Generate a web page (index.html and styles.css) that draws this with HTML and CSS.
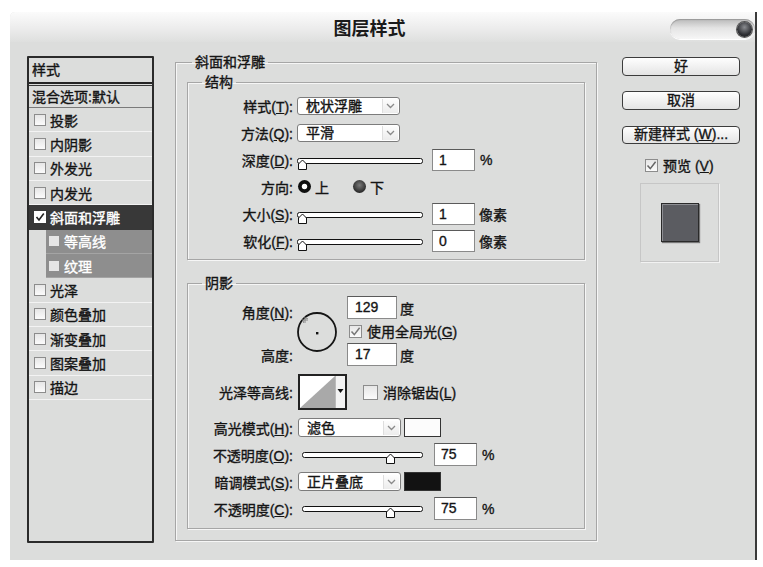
FILE: index.html
```html
<!doctype html>
<html>
<head>
  <meta charset="utf-8">
  <title>图层样式</title>
  <link rel="stylesheet" href="styles.css">
</head>
<body>

<div class="dialog">
  <div class="titlebar">
    <div></div>
    <h1 class="title">图层样式</h1>
    <div class="pill"><span class="pill-ball"></span></div>
  </div>

  <div class="dialog-body">

    <div class="style-list">
      <div class="list-head">样式</div>
      <div class="list-blend">混合选项:默认</div>
      <div class="list-item"><span class="cb"></span>投影</div>
      <div class="list-item"><span class="cb"></span>内阴影</div>
      <div class="list-item"><span class="cb"></span>外发光</div>
      <div class="list-item"><span class="cb"></span>内发光</div>
      <div class="list-item is-selected"><span class="cb is-checked"><svg width="10" height="10" viewBox="0 0 10 10"><path d="M1.5 5 L4 8 L8.8 1.5" fill="none" stroke="#222" stroke-width="1.6"/></svg></span>斜面和浮雕</div>
      <div class="list-item is-sub"><span class="cb"></span>等高线</div>
      <div class="list-item is-sub"><span class="cb"></span>纹理</div>
      <div class="list-item"><span class="cb"></span>光泽</div>
      <div class="list-item"><span class="cb"></span>颜色叠加</div>
      <div class="list-item"><span class="cb"></span>渐变叠加</div>
      <div class="list-item"><span class="cb"></span>图案叠加</div>
      <div class="list-item"><span class="cb"></span>描边</div>
    </div>

    <fieldset class="group group-main">
      <legend>斜面和浮雕</legend>

      <fieldset class="group group-inner group-structure">
        <legend>结构</legend>

        <div class="row">
          <span class="lbl">样式(<u>T</u>):</span>
          <div class="select">枕状浮雕<span class="select-arrow"><svg width="9" height="6" viewBox="0 0 9 6"><path d="M1 1 L4.5 4.5 L8 1" fill="none" stroke="#8a8a8a" stroke-width="1.3"/></svg></span></div>
        </div>

        <div class="row">
          <span class="lbl">方法(<u>Q</u>):</span>
          <div class="select">平滑<span class="select-arrow"><svg width="9" height="6" viewBox="0 0 9 6"><path d="M1 1 L4.5 4.5 L8 1" fill="none" stroke="#8a8a8a" stroke-width="1.3"/></svg></span></div>
        </div>

        <div class="row">
          <span class="lbl">深度(<u>D</u>):</span>
          <svg class="slider slider-top" width="127" height="16" viewBox="0 0 127 16">
            <rect x="0.5" y="4.5" width="125" height="5" rx="2" fill="#fff" stroke="#111"/>
            <path d="M1.5 15.5 V10 L5.5 6 L9.5 10 V15.5 Z" fill="#fff" stroke="#111"/>
          </svg>
          <span class="num">1</span>
          <span class="unit">%</span>
        </div>

        <div class="row">
          <span class="lbl">方向:</span>
          <span class="radio is-on"></span><span class="radio-text">上</span>
          <span class="radio is-off"></span><span class="radio-text">下</span>
        </div>

        <div class="row">
          <span class="lbl">大小(<u>S</u>):</span>
          <svg class="slider slider-top" width="127" height="16" viewBox="0 0 127 16">
            <rect x="0.5" y="4.5" width="125" height="5" rx="2" fill="#fff" stroke="#111"/>
            <path d="M1.5 15.5 V10 L5.5 6 L9.5 10 V15.5 Z" fill="#fff" stroke="#111"/>
          </svg>
          <span class="num">1</span>
          <span class="unit unit-px">像素</span>
        </div>

        <div class="row">
          <span class="lbl">软化(<u>F</u>):</span>
          <svg class="slider slider-top" width="127" height="16" viewBox="0 0 127 16">
            <rect x="0.5" y="4.5" width="125" height="5" rx="2" fill="#fff" stroke="#111"/>
            <path d="M1.5 15.5 V10 L5.5 6 L9.5 10 V15.5 Z" fill="#fff" stroke="#111"/>
          </svg>
          <span class="num">0</span>
          <span class="unit unit-px">像素</span>
        </div>
      </fieldset>

      <fieldset class="group group-inner group-shade">
        <legend>阴影</legend>

        <div class="angle-grid">
          <span class="lbl lbl-angle">角度(<u>N</u>):</span>
          <svg class="dial" width="42" height="42" viewBox="0 0 42 42">
            <circle cx="21" cy="21" r="19" fill="none" stroke="#151515" stroke-width="1.8"/>
            <rect x="20" y="21" width="2.4" height="2.4" fill="#111"/>
            <path d="M9 6 V12 M6 9 H12" stroke="#888" stroke-width="1"/>
            <rect x="10.5" y="7" width="1" height="1" fill="#555"/>
            <rect x="7" y="10.5" width="1" height="1" fill="#555"/>
          </svg>
          <div class="ctl ctl-angle"><span class="num num-wide">129</span><span class="unit unit-deg">度</span></div>
          <div class="ctl ctl-global"><span class="cb is-checked cb-gray"><svg width="11" height="11" viewBox="0 0 11 11"><path d="M1.5 5.5 L4.3 8.6 L9.6 1.8" fill="none" stroke="#777" stroke-width="1.5"/></svg></span><span class="cb-text">使用全局光(<u>G</u>)</span></div>
          <span class="lbl lbl-height">高度:</span>
          <div class="ctl ctl-height"><span class="num num-wide">17</span><span class="unit unit-deg">度</span></div>
        </div>

        <div class="row row-contour">
          <span class="lbl">光泽等高线:</span>
          <svg class="contour" width="49" height="36" viewBox="0 0 49 36">
            <rect x="1" y="1" width="47" height="34" fill="#fff" stroke="#222" stroke-width="2"/>
            <path d="M2 34 L37 2 V34 Z" fill="#a9a9a9"/>
            <rect x="37" y="2" width="10" height="32" fill="#f3f3f3"/>
            <path d="M37.5 2 V34" stroke="#bbb" stroke-width="1"/>
            <path d="M39.5 15 H45.5 L42.5 19 Z" fill="#111"/>
          </svg>
          <span class="cb cb-big"></span><span class="cb-text">消除锯齿(<u>L</u>)</span>
        </div>

        <div class="row">
          <span class="lbl">高光模式(<u>H</u>):</span>
          <div class="select select-mode">滤色<span class="select-arrow"><svg width="9" height="6" viewBox="0 0 9 6"><path d="M1 1 L4.5 4.5 L8 1" fill="none" stroke="#8a8a8a" stroke-width="1.3"/></svg></span></div>
          <span class="swatch swatch-light"></span>
        </div>

        <div class="row">
          <span class="lbl">不透明度(<u>O</u>):</span>
          <svg class="slider slider-mid" width="122" height="16" viewBox="0 0 122 16">
            <rect x="0.5" y="3.5" width="120" height="5" rx="2" fill="#fff" stroke="#111"/>
            <path d="M84.5 14.5 V9 L88.5 5 L92.5 9 V14.5 Z" fill="#fff" stroke="#111"/>
          </svg>
          <span class="num num-op">75</span>
          <span class="unit">%</span>
        </div>

        <div class="row">
          <span class="lbl">暗调模式(<u>S</u>):</span>
          <div class="select select-mode">正片叠底<span class="select-arrow"><svg width="9" height="6" viewBox="0 0 9 6"><path d="M1 1 L4.5 4.5 L8 1" fill="none" stroke="#8a8a8a" stroke-width="1.3"/></svg></span></div>
          <span class="swatch swatch-dark"></span>
        </div>

        <div class="row">
          <span class="lbl">不透明度(<u>C</u>):</span>
          <svg class="slider slider-mid" width="122" height="16" viewBox="0 0 122 16">
            <rect x="0.5" y="3.5" width="120" height="5" rx="2" fill="#fff" stroke="#111"/>
            <path d="M84.5 14.5 V9 L88.5 5 L92.5 9 V14.5 Z" fill="#fff" stroke="#111"/>
          </svg>
          <span class="num num-op">75</span>
          <span class="unit">%</span>
        </div>
      </fieldset>
    </fieldset>

    <div class="side">
      <div class="btn">好</div>
      <div class="btn btn-cancel">取消</div>
      <div class="btn btn-new">新建样式 (<u>W</u>)...</div>
      <div class="preview-check">
        <span class="cb is-checked cb-gray"><svg width="11" height="11" viewBox="0 0 11 11"><path d="M1.5 5.5 L4.3 8.6 L9.6 1.8" fill="none" stroke="#666" stroke-width="1.5"/></svg></span>
        <span class="cb-text">预览 (<u>V</u>)</span>
      </div>
      <div class="preview">
        <div class="preview-swatch"></div>
      </div>
    </div>

  </div>
</div>

</body>
</html>
```

FILE: styles.css
```css
body {
  margin: 0;
  background: #fff;
  color: #141414;
  font-family: "Liberation Sans", "Noto Sans CJK SC", sans-serif;
  font-size: 14px;
}

/* the dialog text in the shot is heavier than Noto's regular cut */
.dialog-body {
  -webkit-text-stroke: 0.35px currentColor;
}

.dialog {
  margin: 12px 0 0 10px;
  width: 747px;
  height: 548px;
  box-sizing: border-box;
  background: #dcdddc;
  border-right: 2px solid #3a3a3a;
  border-radius: 5px 0 0 0;
  overflow: hidden;
}

/* title bar */
.titlebar {
  height: 30px;
  display: grid;
  grid-template-columns: 1fr auto 1fr;
  align-items: center;
  background: linear-gradient(#fbfbfb, #ececec 55%, #dedfde);
}

.title {
  margin: 0;
  padding-right: 26px;
  font-size: 18px;
  font-weight: bold;
  color: #1a1a1a;
}

.pill {
  justify-self: end;
  width: 85px;
  height: 20px;
  margin-top: 4px;
  border-radius: 10px;
  background: linear-gradient(#b9b9b9, #e4e4e4 45%, #f6f6f6);
  box-shadow: inset 0 1px 1px #9a9a9a, 0 1px 0 #fff;
  display: flex;
  align-items: center;
  justify-content: flex-end;
  padding-right: 3px;
  box-sizing: border-box;
}

.pill-ball {
  width: 15px;
  height: 15px;
  border-radius: 50%;
  background: radial-gradient(circle at 50% 35%, #8a8c90, #2f3034 60%, #1a1a1a);
  box-shadow: 0 0 0 1px #555;
}

.dialog-body {
  display: flex;
  align-items: flex-start;
  padding: 14px 0 0 17px;
}

/* left style list */
.style-list {
  width: 127px;
  height: 487px;
  box-sizing: border-box;
  border: 2px solid #2b2b2b;
  border-radius: 1px;
}

.list-head {
  height: 24px;
  line-height: 24px;
  padding-left: 3px;
  border-bottom: 2px solid #252525;
}

.list-blend {
  height: 23px;
  line-height: 22px;
  margin-top: 1px;
  padding-left: 3px;
  box-sizing: border-box;
  border-top: 1px solid #3a3a3a;
  border-bottom: 1px solid #7a7a7a;
}

.list-item {
  height: 24.35px;
  box-sizing: border-box;
  border-bottom: 1px solid #f3f3f3;
  display: flex;
  align-items: center;
  padding-left: 5px;
}

.list-item.is-selected {
  background: #383838;
  color: #fff;
  border-bottom-color: #383838;
}

.list-item.is-sub {
  margin-left: 17px;
  padding-left: 3px;
  background: #8e8e8e;
  color: #fff;
  border-bottom-color: #a4a4a4;
}

.list-item .cb {
  margin-right: 4px;
}

.list-item.is-sub .cb {
  width: 10px;
  height: 10px;
  border: none;
  background: #e6e6e6;
  margin-right: 5px;
}

.list-item.is-selected .cb {
  background: #fff;
  border-color: #fff;
}

/* checkboxes */
.cb {
  width: 12px;
  height: 12px;
  box-sizing: border-box;
  border: 1px solid #8c8c8c;
  background: linear-gradient(#e6e6e6, #fbfbfb);
  display: inline-grid;
  place-items: center;
  flex: none;
}

.cb-big {
  width: 15px;
  height: 15px;
}

.cb-gray {
  width: 13px;
  height: 13px;
}

.cb-text {
  margin-left: 5px;
}

/* group boxes */
.group {
  margin: 0;
  padding: 0;
  border: 1px solid #a6a6a6;
  box-shadow: 1px 1px 0 #f6f6f6, inset 1px 1px 0 #f6f6f6;
  min-width: 0;
}

.group legend {
  padding: 0 3px;
  line-height: 20px;
  margin-left: 16px;
}

.group-main {
  width: 422px;
  box-sizing: border-box;
  margin: -4px 0 0 21px;
  padding-bottom: 11px;
}

.group-inner {
  margin: 0 11px;
}

.group-inner legend {
  margin-left: 14px;
}

.group-structure {
  padding-bottom: 5px;
}

.group-shade {
  margin-top: 13px;
  padding-top: 3px;
  padding-bottom: 6px;
}

/* rows */
.row {
  height: 27px;
  display: flex;
  align-items: center;
}

.lbl {
  width: 107px;
  flex: none;
  box-sizing: border-box;
  padding-right: 2px;
  text-align: right;
  white-space: nowrap;
}

.select {
  width: 103px;
  height: 18px;
  box-sizing: border-box;
  margin-left: 2px;
  padding-left: 8px;
  border: 1px solid #7c7c7c;
  border-radius: 3px;
  background: #fff;
  display: flex;
  align-items: center;
  line-height: 16px;
}

.select-mode {
  margin-left: 3px;
  height: 19px;
}

.select-arrow {
  margin-left: auto;
  margin-right: 1px;
  width: 15px;
  height: 14px;
  border-left: 1px solid #dedede;
  background: linear-gradient(#fdfdfd, #ececec);
  display: grid;
  place-items: center;
}

.slider {
  flex: none;
}

.slider-top {
  margin: 5px 0 0 2px;
}

.slider-mid {
  margin: 4px 0 0 7px;
}

.num {
  width: 43px;
  height: 22px;
  box-sizing: border-box;
  margin-left: 8px;
  padding-left: 6px;
  border: 1px solid #8a8a8a;
  border-top-color: #5a5a5a;
  background: #fff;
  line-height: 20px;
  font-size: 14px;
}

.num-op {
  margin-left: 10px;
  height: 23px;
}

.num-wide {
  width: 50px;
  height: 23px;
  margin-left: 0;
  padding-left: 7px;
  line-height: 21px;
}

.unit {
  margin-left: 5px;
}

.unit-px {
  margin-left: 4px;
}

.unit-deg {
  margin-left: 3px;
}

.radio {
  width: 13px;
  height: 13px;
  border-radius: 50%;
  flex: none;
}

.radio.is-on {
  margin-left: 3px;
  background: radial-gradient(circle, #fff 0 2.3px, #101010 3.2px);
}

.radio.is-off {
  margin-left: 24px;
  background: radial-gradient(circle at 50% 40%, #7a7a7a, #2b2b2b 70%, #151515);
}

.radio-text {
  margin-left: 4px;
}

/* angle block */
.angle-grid {
  display: grid;
  grid-template-columns: 107px 52px auto;
  grid-template-rows: 23px 24px 23px;
  align-items: center;
}

.lbl-angle {
  grid-area: 1 / 1;
  align-self: end;
  margin-bottom: -3px;
}

.lbl-height {
  grid-area: 3 / 1;
}

.dial {
  grid-area: 1 / 2 / 4 / 3;
  margin: 2px 0 0 1px;
}

.ctl {
  display: flex;
  align-items: center;
}

.ctl-angle {
  grid-area: 1 / 3;
}

.ctl-global {
  grid-area: 2 / 3;
  padding-left: 2px;
}

.ctl-height {
  grid-area: 3 / 3;
}

.row-contour {
  height: 36px;
  margin: 8px 0 4px;
}

.contour {
  margin-left: 3px;
  flex: none;
}

.row-contour .cb {
  margin-left: 16px;
}

.swatch {
  width: 37px;
  height: 19px;
  box-sizing: border-box;
  margin-left: 3px;
  border: 1px solid #333;
}

.swatch-light {
  background: #fcfcfc;
}

.swatch-dark {
  background: #121212;
}

/* right column */
.side {
  width: 118px;
  margin-left: 25px;
  padding-top: 1px;
  display: flex;
  flex-direction: column;
}

.btn {
  height: 19px;
  box-sizing: border-box;
  border: 1.5px solid #3c3c3c;
  border-radius: 4px;
  background: linear-gradient(#fefefe, #e4e4e4);
  text-align: center;
  line-height: 16px;
}

.btn-cancel {
  margin-top: 15px;
}

.btn-new {
  margin-top: 16px;
  height: 18px;
  line-height: 15px;
  white-space: nowrap;
}

.preview-check {
  margin-top: 13px;
  padding-left: 23px;
  display: flex;
  align-items: center;
  height: 16px;
}

.preview {
  width: 79px;
  height: 79px;
  box-sizing: border-box;
  margin: 10px 0 0 18px;
  border: 1px solid #c6c6c6;
  box-shadow: 1px 1px 0 #f2f2f2;
  display: grid;
  place-items: center;
}

.preview-swatch {
  width: 38px;
  height: 39px;
  box-sizing: border-box;
  background: #5b5c61;
  border: 1px solid #2a2a2a;
  box-shadow: inset 1px 1px 0 #8d8e93, 1px 1px 1px #777;
}
```
